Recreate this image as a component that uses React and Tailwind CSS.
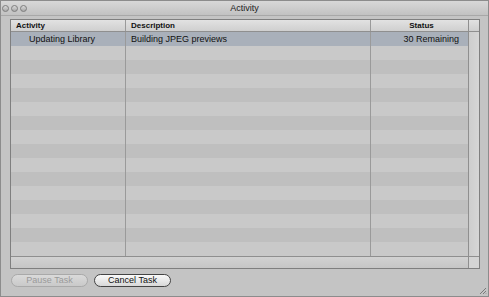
import React from "react";

const font = { fontFamily: '"Liberation Sans", Arial, sans-serif' };

const rows = Array.from({ length: 16 }, (_, i) => i);

function Light() {
  return (
    <span className="w-[7px] h-[7px] rounded-full border border-[#7d7d7d] bg-gradient-to-b from-[#d8d8d8] to-[#a9a9a9]" />
  );
}

function Row({ i }) {
  const selected = i === 0;
  const bg = selected ? "bg-[#a9b0ba]" : i % 2 === 0 ? "bg-[#bfbfbf]" : "bg-[#c9c9c9]";
  return (
    <div className={`grid grid-cols-[115px_245px_97px] h-[14px] ${bg} text-[9px] leading-[14px] text-[#111]`}>
      <div className="border-r border-[#9a9a9a] pl-[18px] truncate">{selected ? "Updating Library" : ""}</div>
      <div className="border-r border-[#9a9a9a] pl-[5px] truncate">{selected ? "Building JPEG previews" : ""}</div>
      <div className="text-right pr-[9px]">{selected ? "30 Remaining" : ""}</div>
    </div>
  );
}

export default function App() {
  return (
    <div style={font} className="w-[489px] h-[297px] bg-[#c4c4c4] border border-[#8c8c8c] flex flex-col overflow-hidden relative">
      {/* title bar */}
      <div className="h-[15px] grid grid-cols-[60px_1fr_60px] items-center bg-gradient-to-b from-[#d8d8d8] to-[#c2c2c2] border-b border-[#a8a8a8]">
        <div className="flex gap-[2px] pl-[1px]">
          <Light />
          <Light />
          <Light />
        </div>
        <div className="text-center text-[9px] leading-[14px] text-[#222]">Activity</div>
        <div />
      </div>

      {/* table */}
      <div className="ml-[9px] mt-[3px] w-[470px] border border-[#7f7f7f] flex flex-col bg-[#c8c8c8]">
        <div className="flex">
          <div className="flex flex-col">
            <div className="grid grid-cols-[115px_245px_97px] h-[12px] bg-gradient-to-b from-[#e2e2e2] to-[#cfcfcf] border-b border-[#8f8f8f] text-[8px] font-bold leading-[11px] text-[#111]">
              <div className="border-r border-[#9a9a9a] pl-[5px]">Activity</div>
              <div className="border-r border-[#9a9a9a] pl-[5px]">Description</div>
              <div className="text-center pl-[4px]">Status</div>
            </div>
            {rows.map((i) => (
              <Row key={i} i={i} />
            ))}
          </div>
          <div className="flex-1 flex flex-col border-l border-[#8f8f8f]">
            <div className="h-[12px] bg-gradient-to-b from-[#e2e2e2] to-[#cfcfcf] border-b border-[#8f8f8f]" />
            <div className="flex-1 bg-gradient-to-r from-[#cdcdcd] to-[#d6d6d6]" />
          </div>
        </div>
        <div className="flex h-[12px] border-t border-[#8f8f8f]">
          <div className="w-[457px] bg-gradient-to-b from-[#d2d2d2] to-[#c6c6c6]" />
          <div className="flex-1 border-l border-[#8f8f8f] bg-[#d4d4d4]" />
        </div>
      </div>

      {/* buttons */}
      <div className="flex gap-[6px] ml-[10px] mt-[5px]">
        <button className="w-[77px] h-[13px] rounded-full border border-[#a9a9a9] bg-gradient-to-b from-[#dadada] to-[#c9c9c9] text-[9px] leading-[11px] text-[#9a9a9a]">
          Pause Task
        </button>
        <button className="w-[77px] h-[13px] rounded-full border border-[#444] bg-gradient-to-b from-[#fafafa] to-[#d8d8d8] text-[9px] leading-[11px] text-[#111]">
          Cancel Task
        </button>
      </div>

      {/* resize grip */}
      <svg className="absolute right-[1px] bottom-[1px]" width="9" height="9" viewBox="0 0 9 9">
        <path d="M8 2 L2 8 M8 5 L5 8 M8 7.5 L7.5 8" stroke="#7a7a7a" strokeWidth="1" />
      </svg>
    </div>
  );
}
